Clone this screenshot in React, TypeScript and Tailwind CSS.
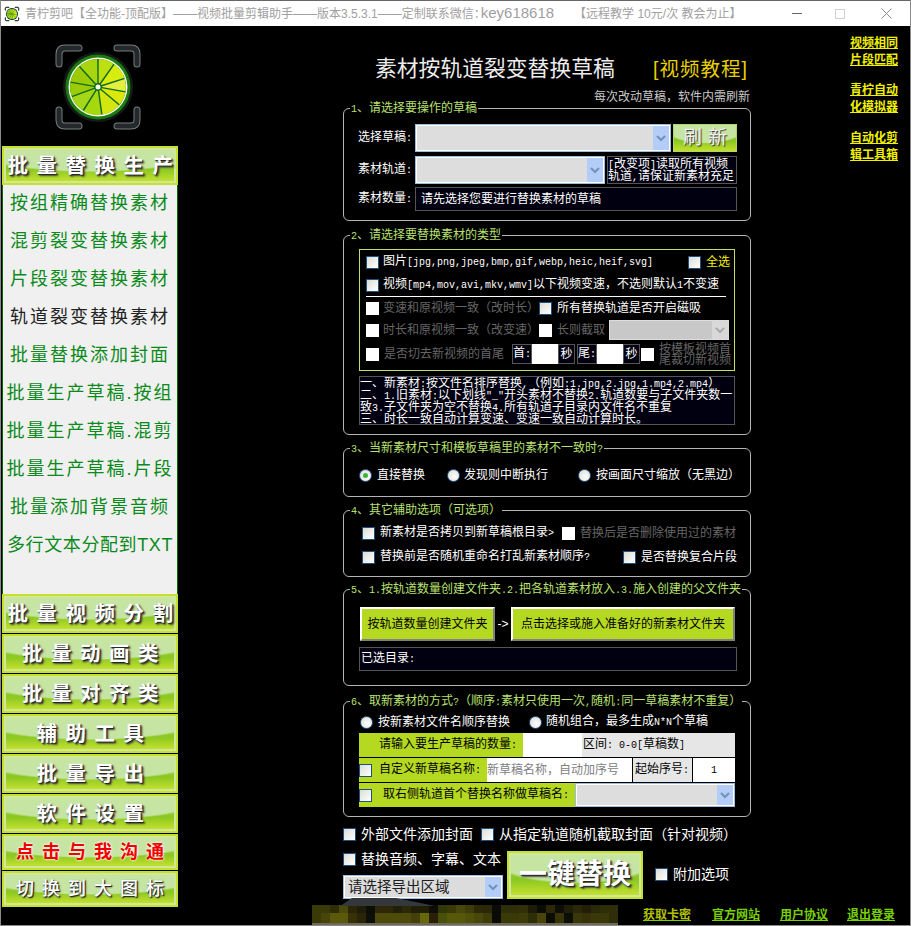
import React from "react";

const gloss =
  "bg-[radial-gradient(ellipse_70%_72%_at_50%_0%,#c6e4a2_93%,transparent_100%),linear-gradient(#9dd060_0%,#8cc820_62%,#c4e030_100%)]";

function Logo({ size, plain }: { size: number; plain?: boolean }) {
  const bounds = [0, 35, 72, 100, 130, 172, 212, 250, 280, 318, 360];
  const fills = ["#bde010", "#d8ec10", "#e4f040", "#dce80c", "#d4e610", "#a6d810", "#a6d618", "#9ccc08", "#9ccc08", "#a8d410"];
  const pt = (deg: number, r: number) => {
    const a = ((deg - 90) * Math.PI) / 180;
    return `${(47 + r * Math.cos(a)).toFixed(2)} ${(47 + r * Math.sin(a)).toFixed(2)}`;
  };
  const corners = [
    "M8 24V14Q8 8 14 8H28",
    "M86 24V14Q86 8 80 8H66",
    "M8 70V80Q8 86 14 86H28",
    "M86 70V80Q86 86 80 86H66",
  ];
  return (
    <svg width={size} height={size} viewBox="0 0 94 94">
      {corners.map((d) => (
        <g key={d} fill="none" strokeLinecap="round">
          <path d={d} stroke="#777c7e" strokeWidth="7" />
          <path d={d} stroke="#23292b" strokeWidth="5" />
        </g>
      ))}
      <circle cx="47" cy="47" r="35" fill={plain ? "#123" : "#141c18"} />
      <circle cx="47" cy="47" r="32.5" fill="#1b7a10" />
      <circle cx="47" cy="47" r="29.5" fill="#f4f8ee" />
      <circle cx="47" cy="47" r="28" fill="#0f6a1a" />
      {fills.map((f, i) => (
        <path
          key={i}
          d={`M${pt(bounds[i] + 10, 4)}L${pt(bounds[i] + 1.5, 28)}A28 28 0 0 1 ${pt(bounds[i + 1] - 1.5, 28)}L${pt(bounds[i + 1] - 10, 4)}Z`}
          fill={f}
        />
      ))}
      <circle cx="47" cy="47" r="2.5" fill="#f4f8ee" />
    </svg>
  );
}

/* Latin runs are set in a half-width monospaced face, as in the original bitmap font */
function T({ children }: { children: string }) {
  return (
    <>
      {children.split(/([\x20-\x7e]+)/).map((part, i) =>
        i % 2 ? (
          <span key={i} className="font-['Liberation_Mono',monospace] text-[10px]">
            {part}
          </span>
        ) : (
          part
        )
      )}
    </>
  );
}

function Chk({ off, cls = "" }: { off?: boolean; cls?: string }) {
  return (
    <span
      className={`inline-block w-[13px] h-[13px] shrink-0 ${
        off ? "bg-white" : "border border-[#1c5180] bg-[linear-gradient(135deg,#dcdcd6,#ffffff)]"
      } ${cls}`}
    />
  );
}

function Radio({ on, cls = "" }: { on?: boolean; cls?: string }) {
  return (
    <span
      className={`inline-flex items-center justify-center w-[13px] h-[13px] shrink-0 rounded-full border border-[#2a5a8a] bg-[radial-gradient(circle_at_60%_60%,#ffffff,#d6d6d0)] ${cls}`}
    >
      {on ? <span className="w-[5px] h-[5px] rounded-full bg-[#3cb43c]" /> : null}
    </span>
  );
}

function Arrow({ off }: { off?: boolean }) {
  return (
    <span
      className={`flex items-center justify-center w-[16px] shrink-0 h-full ${
        off ? "bg-[#d8d8d8]" : "bg-[#b4ccf8]"
      }`}
    >
      <svg width="10" height="7" viewBox="0 0 10 7">
        <path d="M1 1l4 4 4-4" fill="none" stroke={off ? "#aaaaaa" : "#6f93b4"} strokeWidth="2" />
      </svg>
    </span>
  );
}

function Select({ w, h, off }: { w: string; h: string; off?: boolean }) {
  return (
    <div className={`flex box-border border border-[#9ebcdc] p-[1px] bg-white ${w} ${h}`}>
      <div className="flex-1 bg-[#dddddd]" />
      <Arrow off={off} />
    </div>
  );
}

function Section({ h, mt, title, children }: { h: string; mt: string; title: string; children: React.ReactNode }) {
  return (
    <div className={`relative box-border w-[408px] border border-[#b4b4b4] rounded-[6px] ${h} ${mt}`}>
      <span className="absolute left-[6px] top-[-8px] h-[14px] bg-black px-[1px] text-[12px] leading-[14px] text-[#b8e070] whitespace-nowrap">
        <T>{title}</T>
      </span>
      {children}
    </div>
  );
}

function MenuBtn({ label, text }: { label: string; text: string }) {
  return (
    <div className="box-border h-full w-full bg-[#c6e030] p-[2px]">
      <div
        className={`box-border h-full border-2 border-[#d0e89c] flex items-center justify-center whitespace-nowrap ${gloss} ${text}`}
      >
        {label}
      </div>
    </div>
  );
}

const listItems = [
  "按组精确替换素材",
  "混剪裂变替换素材",
  "片段裂变替换素材",
  "轨道裂变替换素材",
  "批量替换添加封面",
  "批量生产草稿.按组",
  "批量生产草稿.混剪",
  "批量生产草稿.片段",
  "批量添加背景音频",
  "多行文本分配到TXT",
];

const mainText =
  "font-bold text-[20.5px] tracking-[8.5px] pl-[9px] text-white [text-shadow:1px_1px_1px_#222,2px_2px_2px_#444]";

const rowA = ["#3a3a08", "#3a3a08", "#302e08", "#4a4a0a", "#2a2408", "#1e1e08", "#0a0e06", "#2e2808", "#2e2808", "#20200a", "#2a2a08", "#201e06", "#201e06", "#0e0e06", "#30380a", "#3a3a08", "#48480a", "#3e3c08", "#2e2a08", "#2a2808", "#0a0a06", "#2e2e08", "#302e08", "#30300a", "#1e1c06", "#0c0c06", "#2a2808", "#0e0e08", "#201e08", "#2a2808", "#241e08", "#2a2a08", "#2e2e08", "#2e2e08"];
const rowB = ["#3a3a08", "#48440a", "#5a5a0a", "#5a5a0a", "#3a3008", "#2a2408", "#0c1008", "#4e4a0a", "#4e4a0a", "#4e4a0a", "#4e4a0a", "#44400a", "#66680a", "#2a2008", "#48500a", "#58580a", "#58580a", "#50500a", "#48480a", "#3e3c08", "#0a0a06", "#3a3a08", "#3a3a08", "#3e3c08", "#2e2e08", "#4a440a", "#0c0c06", "#383408", "#0e0e08", "#383808", "#383008", "#3a3808", "#3a3808", "#2e2e08"];

function Mosaic() {
  return (
    <div className="relative w-[306px] h-[20px] mt-[1px] shrink-0">
      <svg className="absolute left-[8px] top-[-8px]" width="130" height="9" viewBox="0 0 130 9">
        <path d="M20 9L32 1H76L115 9Z" fill="#34383a" />
      </svg>
      <div className="flex h-[8px]">
        {rowA.map((c, i) => (
          <span key={i} className="w-[9px] h-full" style={{ background: c }} />
        ))}
      </div>
      <div className="flex h-[10px]">
        {rowB.map((c, i) => (
          <span key={i} className="w-[9px] h-full" style={{ background: c }} />
        ))}
      </div>
      <div className="h-[2px] bg-[#6e6a58]" />
    </div>
  );
}

export default function App() {
  return (
    <div
      lang="zh-CN"
      className="box-border w-[911px] h-[926px] overflow-hidden bg-black border-x border-b border-x-[#8a8a8a] border-b-[#8a8a8a] flex flex-col text-[12px] leading-[14px] text-white font-['Liberation_Sans','Noto_Sans_CJK_SC',sans-serif]"
    >
      <header className="h-[26px] shrink-0 bg-white border-t border-[#666666] flex items-center text-[#a0a0a0] whitespace-nowrap">
        <span className="ml-[3px] w-[16px] h-[16px] flex">
          <Logo size={16} plain />
        </span>
        <span className="ml-[5px] w-[720px] overflow-hidden">
          青柠剪吧【全功能-顶配版】——视频批量剪辑助手——版本3.5.3.1——定制联系微信：
          <span className="-ml-[5px] text-[15px]">key618618</span> &nbsp; &nbsp; &nbsp;【远程教学 10元/次 教会为止】
        </span>
        <span className="ml-[47px] w-[10px] h-[1px] bg-[#666666]" />
        <span className="ml-[33px] w-[10px] h-[10px] border border-[#d0d0d0]" />
        <svg className="ml-[36px]" width="11" height="11" viewBox="0 0 11 11">
          <path d="M0.5 0.5l10 10M10.5 0.5l-10 10" stroke="#8a8a8a" strokeWidth="1" />
        </svg>
      </header>

      <div className="flex flex-1 min-h-0">
        <aside className="w-[179px] shrink-0 pl-[1px]">
          <div className="ml-[49px] mt-[14px] w-[94px] h-[94px]">
            <Logo size={94} />
          </div>
          <div className="w-[176px] mt-[12px]">
            <div className="h-[39px]">
              <MenuBtn label="批量替换生产" text={mainText} />
            </div>
            <div className="box-border h-[409px] bg-[#f0f0f0] border-x border-[#006a00] pt-[6px] flex flex-col gap-[14px]">
              {listItems.map((t, i) => (
                <div
                  key={t}
                  className={`h-[24px] flex items-center justify-center whitespace-nowrap text-[18px] ${
                    i === 9 ? "tracking-[0.6px]" : "tracking-[2px]"
                  } ${i === 3 ? "text-[#222222]" : "text-[#0a8a1a]"}`}
                >
                  {t}
                </div>
              ))}
            </div>
            <div className="h-[39px]">
              <MenuBtn label="批量视频分割" text={mainText} />
            </div>
            <div className="h-[40px] pt-[1px]">
              <MenuBtn label="批量动画类" text={mainText} />
            </div>
            <div className="h-[40px] pt-[1px]">
              <MenuBtn label="批量对齐类" text={mainText} />
            </div>
            <div className="h-[40px] pt-[1px]">
              <MenuBtn label="辅助工具" text={mainText} />
            </div>
            <div className="h-[40px] pt-[1px]">
              <MenuBtn label="批量导出" text={mainText} />
            </div>
            <div className="h-[40px] pt-[1px]">
              <MenuBtn label="软件设置" text={mainText} />
            </div>
            <div className="h-[37px] pt-[1px]">
              <MenuBtn
                label="点击与我沟通"
                text="font-bold text-[18px] tracking-[8px] pl-[8px] text-[#f00000] [text-shadow:0_0_2px_#ffffff,0_0_3px_#ffffff]"
              />
            </div>
            <div className="h-[37px] pt-[1px]">
              <MenuBtn
                label="切换到大图标"
                text="font-medium text-[18px] tracking-[8px] pl-[8px] text-white [text-shadow:1px_1px_1px_#222,1px_1px_2px_#444]"
              />
            </div>
          </div>
        </aside>

        <div className="flex-1 flex flex-col min-w-0">
          <div className="h-[878px] shrink-0 flex pl-[163px]">
            <main className="w-[408px] shrink-0">
              <div className="mt-[31px] h-[24px] flex items-center pl-[32px] whitespace-nowrap">
                <h1 className="text-[21.8px] font-normal leading-[24px] text-[#ececec] w-[245px]">素材按轨道裂变替换草稿</h1>
                <span className="ml-[33px] text-[19.5px] leading-[24px] text-[#e8d000] tracking-[1px]">[视频教程]</span>
              </div>
              <div className="mt-[9px] h-[14px] text-right text-[#c8c8c8] whitespace-nowrap pr-[1px]">
                每次改动草稿，软件内需刷新
              </div>

              <Section h="h-[113px]" mt="mt-[4px]" title="1、请选择要操作的草稿">
                <div className="pt-[15px] pl-[14px]">
                  <div className="flex h-[28px] items-center">
                    <span className="w-[57px] whitespace-nowrap"><T>选择草稿:</T></span>
                    <Select w="w-[256px]" h="h-[28px]" />
                    <div className={`ml-[2px] w-[64px] h-[28px] border border-[#b0d860] flex items-center justify-center text-[19px] tracking-[6px] pl-[6px] text-[#f0f0f0] [text-shadow:1px_1px_1px_#333] ${gloss}`}>
                      刷新
                    </div>
                  </div>
                  <div className="flex h-[28px] items-center mt-[4px]">
                    <span className="w-[57px] whitespace-nowrap"><T>素材轨道:</T></span>
                    <Select w="w-[190px]" h="h-[28px]" />
                    <div className="ml-[2px] box-border w-[130px] h-[28px] border border-[#555555] bg-[#000010] leading-[12px] whitespace-nowrap overflow-hidden pt-[1px]">
                      <div className="h-[12px]"><T>[改变项]读取所有视频</T></div>
                      <div className="h-[12px]"><T>轨道,请保证新素材充足</T></div>
                    </div>
                  </div>
                  <div className="flex h-[24px] items-center mt-[3px]">
                    <span className="w-[57px] whitespace-nowrap"><T>素材数量:</T></span>
                    <div className="box-border w-[322px] h-[24px] border border-[#555555] bg-[#000010] pl-[5px] flex items-center">
                      请先选择您要进行替换素材的草稿
                    </div>
                  </div>
                </div>
              </Section>

              <Section h="h-[200px]" mt="mt-[14px]" title="2、请选择要替换素材的类型">
                <div className="pt-[13px] pl-[15px]">
                  <div className="box-border w-[376px] h-[122px] border border-[#c0e060] pl-[6px] whitespace-nowrap">
                    <div className="h-[24px] flex items-center">
                      <Chk />
                      <span className="ml-[4px] w-[305px]"><T>图片[jpg,png,jpeg,bmp,gif,webp,heic,heif,svg]</T></span>
                      <Chk />
                      <span className="ml-[5px] text-[#f4f400]">全选</span>
                    </div>
                    <div className="h-[22px] flex items-center">
                      <Chk />
                      <span className="ml-[4px]"><T>视频[mp4,mov,avi,mkv,wmv]以下视频变速，不选则默认1不变速</T></span>
                    </div>
                    <div className="h-[1px] w-[360px] bg-white" />
                    <div className="h-[22px] flex items-center">
                      <Chk off />
                      <span className="ml-[4px] w-[156px] text-[#666666]">变速和原视频一致（改时长）</span>
                      <Chk />
                      <span className="ml-[5px]">所有替换轨道是否开启磁吸</span>
                    </div>
                    <div className="h-[22px] flex items-center">
                      <Chk off />
                      <span className="ml-[4px] w-[156px] text-[#666666]">时长和原视频一致（改变速）</span>
                      <Chk off />
                      <span className="ml-[5px] w-[52px] text-[#666666]">长则截取</span>
                      <div className="flex w-[120px] h-[20px] bg-[#c8c8c8] border border-[#dddddd]">
                        <div className="flex-1" />
                        <Arrow off />
                      </div>
                    </div>
                    <div className="h-[26px] flex items-center">
                      <Chk off />
                      <span className="ml-[5px] w-[128px] text-[#666666]">是否切去新视频的首尾</span>
                      <span className="box-border w-[20px] h-[20px] border border-[#555555] flex items-center justify-center bg-[#000010]"><span><T>首:</T></span></span>
                      <span className="w-[26px] h-[20px] bg-white" />
                      <span className="box-border w-[17px] h-[20px] border border-[#555555] flex items-center justify-center bg-[#000010]">秒</span>
                      <span className="box-border ml-[2px] w-[20px] h-[20px] border border-[#555555] flex items-center justify-center bg-[#000010]"><span><T>尾:</T></span></span>
                      <span className="w-[26px] h-[20px] bg-white" />
                      <span className="box-border w-[17px] h-[20px] border border-[#555555] flex items-center justify-center bg-[#000010]">秒</span>
                      <Chk off cls="ml-[1px]" />
                      <div className="ml-[5px] text-[#666666] leading-[12px]">
                        <div className="h-[11px]">按模板视频首</div>
                        <div className="h-[11px]">尾裁切新视频</div>
                      </div>
                    </div>
                  </div>
                  <div className="box-border mt-[5px] w-[376px] h-[49px] border border-[#555555] bg-[#000010] leading-[12px] whitespace-nowrap overflow-hidden">
                    <div className="h-[12px]"><T>一、新素材:按文件名排序替换,（例如:1.jpg,2.jpg,1.mp4,2.mp4）</T></div>
                    <div className="h-[12px]"><T>二、1.旧素材:以下划线"_"开头素材不替换2.轨道数要与子文件夹数一</T></div>
                    <div className="h-[12px]"><T>致3.子文件夹为空不替换4.所有轨道子目录内文件名不重复</T></div>
                    <div className="h-[11px]">三、时长一致自动计算变速、变速一致自动计算时长。</div>
                  </div>
                </div>
              </Section>

              <Section h="h-[49px]" mt="mt-[13px]" title="3、当新素材尺寸和模板草稿里的素材不一致时?">
                <div className="pt-[19px] pl-[15px] flex items-center whitespace-nowrap">
                  <Radio on />
                  <span className="ml-[5px] w-[70px]">直接替换</span>
                  <Radio />
                  <span className="ml-[4px] w-[114px]">发现则中断执行</span>
                  <Radio />
                  <span className="ml-[5px]">按画面尺寸缩放（无黑边）</span>
                </div>
              </Section>

              <Section h="h-[67px]" mt="mt-[13px]" title="4、其它辅助选项（可选项）">
                <div className="pt-[15px] pl-[18px] whitespace-nowrap">
                  <div className="flex items-center h-[14px]">
                    <Chk />
                    <span className="ml-[5px] w-[182px]"><T>新素材是否拷贝到新草稿根目录&gt;</T></span>
                    <Chk off />
                    <span className="ml-[5px] text-[#666666]">替换后是否删除使用过的素材</span>
                  </div>
                  <div className="flex items-center h-[14px] mt-[10px]">
                    <Chk />
                    <span className="ml-[5px] w-[243px]"><T>替换前是否随机重命名打乱新素材顺序?</T></span>
                    <Chk />
                    <span className="ml-[5px]">是否替换复合片段</span>
                  </div>
                </div>
              </Section>

              <Section h="h-[97px]" mt="mt-[12px]" title="5、1.按轨道数量创建文件夹.2.把各轨道素材放入.3.施入创建的父文件夹">
                <div className="pt-[17px] pl-[16px] whitespace-nowrap">
                  <div className="flex items-center h-[34px] text-black">
                    <div className="box-border w-[135px] h-full bg-[#b5d820] border-2 border-t-white border-l-white border-r-[#808080] border-b-[#808080] flex items-center justify-center">
                      按轨道数量创建文件夹
                    </div>
                    <span className="w-[16px] text-center text-white">-&gt;</span>
                    <div className="box-border w-[224px] h-full bg-[#b5d820] border-2 border-t-white border-l-white border-r-[#808080] border-b-[#808080] flex items-center justify-center">
                      点击选择或施入准备好的新素材文件夹
                    </div>
                  </div>
                  <div className="box-border -ml-[1px] mt-[6px] w-[378px] h-[24px] border border-[#555555] bg-[#000010] flex items-center pl-[1px]">
                    <span><T>已选目录:</T></span>
                  </div>
                </div>
              </Section>

              <Section h="h-[116px]" mt="mt-[15px]" title="6、取新素材的方式?（顺序:素材只使用一次,随机:同一草稿素材不重复）">
                <div className="pt-[13px] pl-[15px] whitespace-nowrap">
                  <div className="flex items-center h-[14px] pl-[1px]">
                    <Radio />
                    <span className="ml-[5px] w-[151px]">按新素材文件名顺序替换</span>
                    <Radio />
                    <span className="ml-[4px]"><T>随机组合，最多生成N*N个草稿</T></span>
                  </div>
                  <div className="mt-[4px] w-[376px] flex flex-col gap-[1px] text-black">
                    <div className="flex h-[24px]">
                      <div className="w-[164px] bg-[#b5d820] flex items-center pl-[20px]"><span><T>请输入要生产草稿的数量:</T></span></div>
                      <div className="w-[59px] bg-white" />
                      <div className="flex-1 bg-[#e6e6e6] flex items-center pl-[1px]"><span><T>区间: 0-0[草稿数]</T></span></div>
                    </div>
                    <div className="flex h-[24px]">
                      <div className="w-[128px] bg-[#b5d820] flex items-center">
                        <Chk />
                        <span className="ml-[7px]"><T>自定义新草稿名称:</T></span>
                      </div>
                      <div className="w-[145px] bg-white text-[#808080] flex items-center">新草稿名称，自动加序号</div>
                      <div className="ml-[1px] w-[59px] bg-[#e6e6e6] flex items-center pl-[2px]"><span><T>起始序号:</T></span></div>
                      <div className="ml-[1px] flex-1 bg-white flex items-center justify-center"><span><T>1</T></span></div>
                    </div>
                    <div className="flex h-[24px]">
                      <div className="w-[216px] bg-[#b5d820] flex items-center">
                        <Chk />
                        <span className="ml-[11px]"><T>取右侧轨道首个替换名称做草稿名:</T></span>
                      </div>
                      <Select w="w-[160px]" h="h-[24px]" />
                    </div>
                  </div>
                </div>
              </Section>

              <div className="mt-[10px] h-[14px] flex items-center whitespace-nowrap text-[14px]">
                <Chk />
                <span className="ml-[5px] w-[120px]">外部文件添加封面</span>
                <Chk />
                <span className="ml-[5px]">从指定轨道随机截取封面（针对视频）</span>
              </div>
              <div className="mt-[10px] h-[48px] flex whitespace-nowrap">
                <div className="w-[160px] flex flex-col">
                  <div className="h-[16px] flex items-center text-[14px]">
                    <Chk />
                    <span className="ml-[5px]">替换音频、字幕、文本</span>
                  </div>
                  <div className="mt-auto box-border flex w-[160px] h-[24px] border border-[#9ebcdc] p-[1px] bg-white">
                    <div className="flex-1 flex items-center pl-[3px] bg-[#dcdcdc] text-[#202020] text-[14.5px]">请选择导出区域</div>
                    <Arrow />
                  </div>
                </div>
                <div className="ml-[4px] w-[136px] h-[48px]">
                  <MenuBtn
                    label="一键替换"
                    text="font-bold text-[28px] text-white [text-shadow:1px_1px_1px_#222,2px_2px_2px_#444]"
                  />
                </div>
                <div className="ml-[12px] flex items-center text-[14px] h-[46px]">
                  <Chk />
                  <span className="ml-[5px]">附加选项</span>
                </div>
              </div>
            </main>

            <nav className="ml-[99px] mt-[9px] w-[48px] font-bold text-[12px] leading-[17px] text-[#f0f000] underline whitespace-nowrap">
              <div>
                视频相同
                <br />
                片段匹配
              </div>
              <div className="mt-[13px]">
                青柠自动
                <br />
                化模拟器
              </div>
              <div className="mt-[14px]">
                自动化剪
                <br />
                辑工具箱
              </div>
            </nav>
          </div>

          <div className="flex pl-[132px] whitespace-nowrap">
            <Mosaic />
            <div className="ml-[25px] pt-[4px] flex font-bold underline text-[12px] text-[#78d000]">
              <span className="w-[48px] text-[#b0c000]">获取卡密</span>
              <span className="ml-[21px] w-[48px]">官方网站</span>
              <span className="ml-[20px] w-[48px]">用户协议</span>
              <span className="ml-[19px] w-[48px]">退出登录</span>
            </div>
          </div>
        </div>
      </div>
    </div>
  );
}
